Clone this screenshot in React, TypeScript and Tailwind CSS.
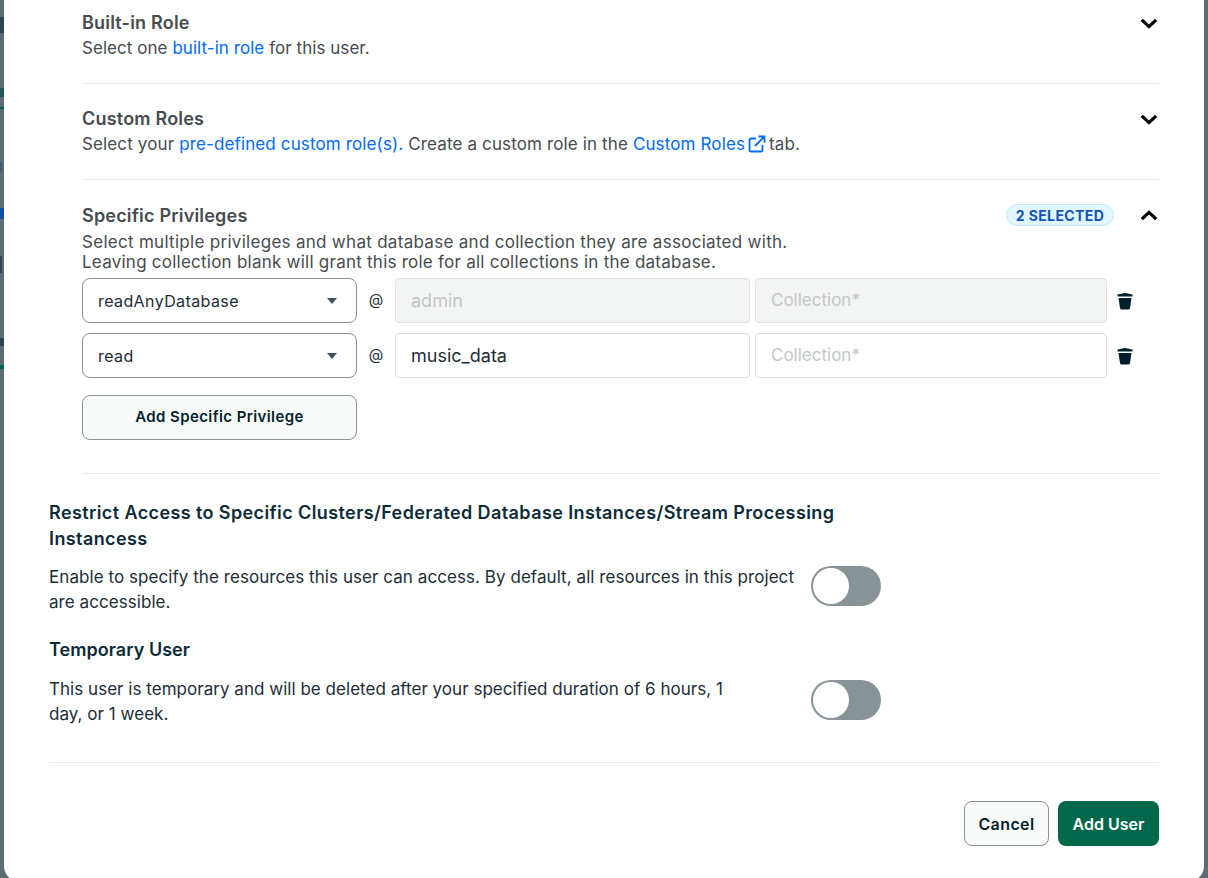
import * as React from "react";

function Chevron({ up }: { up?: boolean }) {
  return (
    <svg width="18" height="18" viewBox="0 0 18 18" className={up ? "rotate-180" : ""}>
      <path d="M1.800 5.800 L9 12.600 L16.200 5.800" fill="none" stroke="#000" strokeWidth="3.200" />
    </svg>
  );
}

function Trash() {
  return (
    <svg width="16" height="18" viewBox="0 0 16 18" className="shrink-0">
      <path d="M5.500 1.500 Q8 0.400 10.500 1.500 L15.500 2.500 V4.500 H0.500 V2.500 Z" fill="#001e2b" />
      <path d="M1.500 6 H14.500 L13 16 Q12.800 17.500 11 17.500 H5 Q3.200 17.500 3 16 Z" fill="#001e2b" />
    </svg>
  );
}

function Toggle({ className }: { className: string }) {
  return (
    <div className={`flex h-10 w-[70px] shrink-0 items-center rounded-full bg-[#889397] pl-[2px] ${className}`}>
      <div className="h-9 w-9 rounded-full bg-white" />
    </div>
  );
}

function Section({ title, children, right }: { title: string; children: React.ReactNode; right?: React.ReactNode }) {
  return (
    <div className="flex justify-between">
      <div>
        <p className="mb-[1px] text-[18px] leading-6 font-semibold tracking-[0.2px] text-[#464c4f]">{title}</p>
        {children}
      </div>
      {right}
    </div>
  );
}

function PrivilegeRow({ role, db, disabled }: { role: string; db: string; disabled?: boolean }) {
  const box = disabled ? "bg-[#f3f5f4] text-[#c1c7c6]" : "bg-white text-[#1c2d38]";
  return (
    <div className="flex items-center">
      <div className="flex h-[45px] w-[275px] items-center justify-between rounded-[8px] border border-[#889397] bg-white pr-[19px] pl-[15px] text-[16px] tracking-[0.4px] text-[#1c2d38]">
        <span>{role}</span>
        <span className="h-0 w-0 border-x-[5px] border-t-[6px] border-x-transparent border-t-[#3d4f58]" />
      </div>
      <span className="w-[38px] text-center text-[15px] text-[#1c2d38]">@</span>
      <div className={`flex h-[45px] w-[355px] items-center rounded-[4px] border border-[#dfe2e2] pl-[15px] text-[18px] ${box}`}>{db}</div>
      <div className={`ml-[5px] flex h-[45px] w-[352px] items-center rounded-[4px] border border-[#dfe2e2] pl-[15px] text-[17px] text-[#c1c7c6] ${disabled ? "bg-[#f3f5f4]" : "bg-white"}`}>
        Collection*
      </div>
      <div className="ml-[10px]">
        <Trash />
      </div>
    </div>
  );
}

// what still shows of the page behind the modal
function LeftStrip() {
  return (
    <div className="flex h-[878px] w-1 shrink-0 flex-col">
      <div className="mt-[17px] h-[16px] w-1 bg-[#2f4350]" />
      <div className="mt-[55px] h-[9px] w-1 bg-[#1f5a58]" />
      <div className="mt-[10px] h-[2px] w-1 bg-[#00684a]" />
      <div className="mt-[53px] h-[10px] w-[2px] bg-[#3d5a78]" />
      <div className="mt-[36px] h-[11px] w-1 bg-[#0f4fa8]" />
      <div className="mt-[37px] h-[17px] w-[2px] bg-[#2f4350]" />
      <div className="mt-[65px] h-[8px] w-1 bg-[#2f4350]" />
      <div className="mt-[19px] h-[4px] w-1 bg-[#00684a]" />
    </div>
  );
}

export default function App() {
  return (
    <div className="flex h-[878px] w-[1208px] overflow-hidden bg-[#5d6c74] font-['Inter',sans-serif]">
      <LeftStrip />
      <div className="h-[882px] w-[1200px] shrink-0 rounded-b-[16px] bg-white px-[45px]">
        <div className="pl-[33px]">
          <div className="border-b border-[#e8eaea] pt-[11px] pb-[23px]">
            <Section title="Built-in Role" right={<div className="mt-[3px] mr-[1px]"><Chevron /></div>}>
              <p className="text-[17px] leading-6 tracking-[0.05px] text-[#464c4f]">
                Select one <span className="text-[#016bf8]">built-in role</span> for this user.
              </p>
            </Section>
          </div>
          <div className="border-b border-[#e8eaea] pt-[23px] pb-[23px]">
            <Section title="Custom Roles" right={<div className="mt-[3px] mr-[1px]"><Chevron /></div>}>
              <p className="flex items-center text-[17px] leading-6 tracking-[0.13px] text-[#464c4f]">
                <span>Select your&nbsp;</span>
                <span className="text-[#016bf8]">pre-defined custom role(s).</span>
                <span>&nbsp;Create a custom role in the&nbsp;</span>
                <span className="text-[#016bf8]">Custom Roles</span>
                <svg width="20" height="20" viewBox="0 0 20 20" className="mx-[2px]" fill="none" stroke="#016bf8" strokeWidth="1.800">
                  <path d="M9 4.500H4A1.500 1.500 0 0 0 2.500 6v10A1.500 1.500 0 0 0 4 17.500h10a1.500 1.500 0 0 0 1.500-1.500v-5" />
                  <path d="M8 12 L17.500 2.500 M11.500 2.500 H17.500 V8.500" />
                </svg>
                <span>tab.</span>
              </p>
            </Section>
          </div>
          <div className="border-b border-[#e8eaea] pt-[24px] pb-[33px]">
            <Section
              title="Specific Privileges"
              right={
                <div className="flex items-start">
                  <span className="flex h-[22px] w-[108px] items-center justify-center rounded-full border border-[#c3e7fe] bg-[#e1f7ff] text-[14px] font-bold tracking-[0.4px] text-[#1254b7]">
                    2 SELECTED
                  </span>
                  <div className="mt-[3px] mr-[1px] ml-[26px]">
                    <Chevron up />
                  </div>
                </div>
              }
            >
              <p className="mt-[4px] text-[17px] leading-[20px] tracking-[0.29px] text-[#464c4f]">
                Select multiple privileges and what database and collection they are associated with.
                <br />
                <span className="tracking-[0.24px]">Leaving collection blank will grant this role for all collections in the database.</span>
              </p>
            </Section>
            <div className="mt-[6px] flex flex-col gap-[10px]">
              <PrivilegeRow role="readAnyDatabase" db="admin" disabled />
              <PrivilegeRow role="read" db="music_data" />
            </div>
            <button className="mt-[17px] flex h-[45px] w-[275px] items-center justify-center rounded-[8px] border border-[#889397] bg-[#f9fbfa] text-[15px] font-semibold tracking-[0.4px] text-[#001e2b]">
              Add Specific Privilege
            </button>
          </div>
        </div>
        <div className="border-b border-[#e8eaea] pt-[26px] pb-[35px]">
          <p className="w-[800px] text-[18px] leading-[26px] font-semibold tracking-[0.4px] text-[#0c2b38]">
            Restrict Access to Specific Clusters/Federated Database Instances/Stream Processing Instancess
          </p>
          <div className="mt-[13px] flex items-start">
            <p className="w-[762px] pr-[10px] text-[17px] leading-[25px] tracking-[0.06px] text-[#1c2d38]">
              Enable to specify the resources this user can access. By default, all resources in this project are accessible.
            </p>
            <Toggle className="mt-[1px]" />
          </div>
          <p className="mt-[22px] text-[18px] leading-[26px] font-semibold tracking-[0.05px] text-[#0c2b38]">Temporary User</p>
          <div className="mt-[14px] flex items-start">
            <p className="w-[762px] pr-[60px] text-[17px] leading-[25px] tracking-[0.03px] text-[#1c2d38]">
              This user is temporary and will be deleted after your specified duration of 6 hours, 1 day, or 1 week.
            </p>
            <Toggle className="mt-[3px]" />
          </div>
        </div>
        <div className="mt-[38px] flex justify-end gap-[9px]">
          <button className="h-[45px] w-[85px] rounded-[8px] border border-[#889397] bg-[#f9fbfa] text-[16px] font-semibold tracking-[0.4px] text-[#001e2b]">
            Cancel
          </button>
          <button className="h-[45px] w-[101px] rounded-[8px] bg-[#00684a] text-[16px] font-semibold text-white">Add User</button>
        </div>
      </div>
    </div>
  );
}
